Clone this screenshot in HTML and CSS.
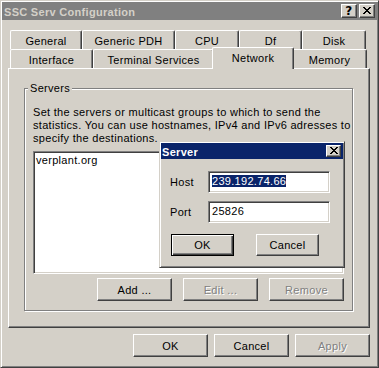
FILE: index.html
```html
<!DOCTYPE html>
<html lang="en">
<head>
  <meta charset="UTF-8">
  <title>SSC Serv Configuration</title>
  <link rel="stylesheet" href="styles.css">
</head>
<body>
  <div class="window">
    <div class="titlebar inactive">
      <span class="title">SSC Serv Configuration</span>
      <div class="caption-btns">
        <span class="cap-btn help">?</span>
        <span class="cap-btn">
          <svg width="8" height="7" viewBox="0 0 8 7"><path d="M0 0h2v1h1v1h2v-1h1v-1h2v1h-1v1h-1v1h-1v1h1v1h1v1h1v1h-2v-1h-1v-1h-2v1h-1v1h-2v-1h1v-1h1v-1h1v-1h-1v-1h-1v-1h-1z" fill="#000"/></svg>
        </span>
      </div>
    </div>

    <div class="sheet">
      <div class="tabs">
        <div class="tab-row">
          <div class="tab" style="width: 72px">General</div>
          <div class="tab" style="width: 93px">Generic PDH</div>
          <div class="tab" style="width: 64px">CPU</div>
          <div class="tab" style="width: 63px">Df</div>
          <div class="tab" style="width: 64px">Disk</div>
        </div>
        <div class="tab-row">
          <div class="tab" style="width: 83px">Interface</div>
          <div class="tab" style="width: 121px">Terminal Services</div>
          <div class="tab selected" style="width: 82px">Network</div>
          <div class="tab" style="width: 75px">Memory</div>
        </div>
      </div>

      <div class="panel">
        <div class="group">
          <span class="group-label">Servers</span>
          <p class="desc">Set the servers or multicast groups to which to send the<br>statistics. You can use hostnames, IPv4 and IPv6 adresses to<br>specify the destinations.</p>
          <div class="listbox">
            <div class="item">verplant.org</div>
          </div>
          <div class="btn-row">
            <button class="btn">Add ...</button>
            <button class="btn" disabled>Edit ...</button>
            <button class="btn" disabled>Remove</button>
          </div>
        </div>
      </div>

      <div class="sheet-btns">
        <button class="btn">OK</button>
        <button class="btn">Cancel</button>
        <button class="btn" disabled>Apply</button>
      </div>
    </div>

    <div class="dialog">
      <div class="titlebar small">
        <span class="title">Server</span>
        <span class="cap-btn">
          <svg width="8" height="7" viewBox="0 0 8 7"><path d="M0 0h2v1h1v1h2v-1h1v-1h2v1h-1v1h-1v1h-1v1h1v1h1v1h1v1h-2v-1h-1v-1h-2v1h-1v1h-2v-1h1v-1h1v-1h1v-1h-1v-1h-1v-1h-1z" fill="#000"/></svg>
        </span>
      </div>
      <div class="dialog-body">
        <div class="field">
          <label>Host</label>
          <div class="edit"><span class="sel">239.192.74.66</span></div>
        </div>
        <div class="field">
          <label>Port</label>
          <div class="edit">25826</div>
        </div>
        <div class="dialog-btns">
          <button class="btn small default">OK</button>
          <button class="btn small">Cancel</button>
        </div>
      </div>
    </div>
  </div>
</body>
</html>
```

FILE: styles.css
```css
* {
  margin: 0;
  padding: 0;
  box-sizing: border-box;
}

body {
  background: #d4d0c8;
  font: 11px 'Liberation Sans', Arial, sans-serif;
  letter-spacing: 0.3px;
  color: #000000;
}

.window {
  position: relative;
  width: 379px;
  height: 368px;
  padding: 1px;
  background: #d4d0c8;
  border: 1px solid;
  border-color: #d4d0c8 #404040 #404040 #d4d0c8;
  box-shadow: inset 1px 1px #ffffff, inset -1px -1px #808080;
}

.titlebar {
  height: 18px;
  padding: 0 2px;
  display: flex;
  align-items: center;
  justify-content: space-between;
  background: #0a246a;
  color: #ffffff;
}

.titlebar.inactive {
  background: #808080;
  color: #d4d0c8;
}

.titlebar .title {
  font-weight: bold;
  white-space: nowrap;
  padding-top: 1px;
}

.caption-btns {
  display: flex;
  gap: 2px;
}

.cap-btn {
  width: 16px;
  height: 14px;
  display: flex;
  align-items: center;
  justify-content: center;
  background: #d4d0c8;
  border: 1px solid;
  border-color: #ffffff #404040 #404040 #ffffff;
  box-shadow: inset -1px -1px #808080;
  color: #000000;
}

.cap-btn.help {
  font: bold 12px 'DejaVu Sans', sans-serif;
  line-height: 12px;
  padding-bottom: 1px;
}

.cap-btn svg {
  display: block;
  margin-top: -1px;
}

/* property sheet */

.sheet {
  padding: 10px 0 0 6px;
}

.tabs {
  margin-left: 2px;
}

.tab-row {
  display: flex;
  height: 19px;
}

.tab {
  height: 19px;
  flex-shrink: 0;
  display: flex;
  justify-content: center;
  padding-top: 4px;
  white-space: nowrap;
  background: #d4d0c8;
  border-top: 1px solid #ffffff;
  border-left: 1px solid #ffffff;
  border-right: 1px solid #404040;
  border-radius: 2px 2px 0 0;
  box-shadow: inset -1px 0 #808080;
}

.tab.selected {
  position: relative;
  z-index: 1;
  height: 22px;
  margin: -2px -2px -1px -2px;
  padding-top: 4px;
}

.panel {
  width: 362px;
  height: 260px;
  padding: 19px 0 0 15px;
  border: 1px solid;
  border-color: #ffffff #404040 #404040 #ffffff;
  box-shadow: inset -1px -1px #808080;
}

.group {
  position: relative;
  width: 329px;
  height: 223px;
  padding: 16px 8px 0;
  border: 1px solid #808080;
  box-shadow: 1px 1px #ffffff, inset 1px 1px #ffffff;
}

.group-label {
  position: absolute;
  top: -7px;
  left: 3px;
  padding: 0 2px;
  line-height: 13px;
  background: #d4d0c8;
}

.desc {
  line-height: 13px;
  white-space: nowrap;
  padding-top: 1px;
}

.listbox {
  width: 311px;
  height: 123px;
  margin-top: 6px;
  padding: 2px 2px;
  background: #ffffff;
  border: 1px solid;
  border-color: #808080 #ffffff #ffffff #808080;
  box-shadow: inset 1px 1px #404040, inset -1px -1px #d4d0c8;
}

.item {
  line-height: 13px;
}

.btn-row {
  display: flex;
  justify-content: flex-end;
  gap: 11px;
  margin-top: 4px;
}

.btn {
  width: 75px;
  height: 23px;
  font: 11px 'Liberation Sans', Arial, sans-serif;
  letter-spacing: 0.3px;
  color: #000000;
  background: #d4d0c8;
  border: 1px solid;
  border-color: #ffffff #404040 #404040 #ffffff;
  box-shadow: inset -1px -1px #808080;
}

.btn:disabled {
  color: #808080;
  text-shadow: 1px 1px #ffffff;
}

.btn.small {
  width: 63px;
  height: 22px;
}

.btn.default {
  border: 1px solid #000000;
  box-shadow: inset 1px 1px #ffffff, inset -1px -1px #404040, inset -2px -2px #808080;
}

.sheet-btns {
  width: 362px;
  display: flex;
  justify-content: flex-end;
  gap: 6px;
  margin-top: 6px;
}

/* server dialog */

.dialog {
  position: absolute;
  left: 158px;
  top: 140px;
  width: 186px;
  height: 127px;
  padding: 1px;
  background: #d4d0c8;
  border: 1px solid;
  border-color: #d4d0c8 #404040 #404040 #d4d0c8;
  box-shadow: inset 1px 1px #ffffff, inset -1px -1px #808080;
}

.titlebar.small {
  height: 16px;
  padding: 0 2px 0 1px;
}

.titlebar.small .cap-btn {
  width: 15px;
  height: 12px;
}

.dialog-body {
  padding: 12px 0 0 9px;
}

.field {
  display: flex;
  align-items: center;
  height: 22px;
  margin-bottom: 8px;
}

.field label {
  width: 38px;
}

.edit {
  width: 122px;
  height: 22px;
  padding: 3px 0 0 3px;
  background: #ffffff;
  border: 1px solid;
  border-color: #808080 #ffffff #ffffff #808080;
  box-shadow: inset 1px 1px #404040, inset -1px -1px #d4d0c8;
  line-height: 13px;
  white-space: nowrap;
}

.edit .sel {
  background: #0a246a;
  color: #ffffff;
}

.dialog-btns {
  display: flex;
  gap: 22px;
  margin: 11px 0 0 1px;
}
```
